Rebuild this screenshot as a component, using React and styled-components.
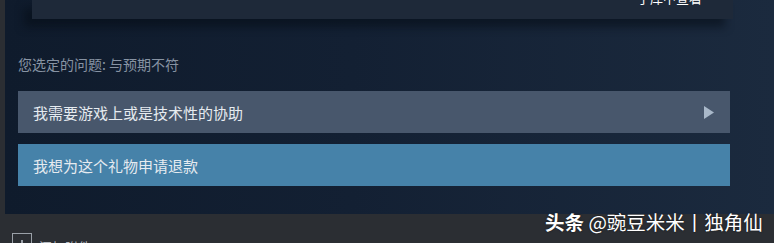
import React from "react";
import styled, { createGlobalStyle } from "styled-components";

const GlobalStyle = createGlobalStyle`
  html, body {
    margin: 0;
    padding: 0;
    background: #2b2e33;
    font-family: "Noto Sans CJK SC", "Noto Sans", sans-serif;
    overflow: hidden;
  }
`;

const Page = styled.div`
  position: relative;
  width: 774px;
  height: 243px;
  overflow: hidden;
  background: #2b2e33;
`;

const Panel = styled.div`
  margin-left: 5px;
  height: 214px;
  background: linear-gradient(90deg, #0f1b2c 0%, #132033 45%, #1b2a3e 100%);
  display: flex;
  flex-direction: column;
  padding-left: 13px;
  box-sizing: border-box;
`;

const TopCard = styled.div`
  margin-left: 14px;
  width: 701px;
  height: 19px;
  background: #1e2939;
  box-shadow: -8px 8px 8px rgba(5, 12, 22, 0.55);
  display: flex;
  justify-content: flex-end;
  align-items: flex-start;
  overflow: hidden;
  padding-right: 31px;
  box-sizing: border-box;
`;

const CardLink = styled.span`
  margin-top: -9px;
  font-size: 13px;
  line-height: 14px;
  color: #ffffff;
`;

const Label = styled.div`
  margin-top: 38px;
  font-size: 14px;
  line-height: 15px;
  color: #8793a3;
`;

const Options = styled.div`
  margin-top: 19px;
  display: flex;
  flex-direction: column;
  gap: 11px;
  width: 712px;
`;

const Option = styled.div`
  height: 42px;
  display: flex;
  align-items: center;
  justify-content: space-between;
  padding: 0 16px 0 15px;
  box-sizing: border-box;
  background: ${(p) => (p.$active ? "#4682a9" : "#48576c")};
  color: #e6ebf0;
  font-size: 15px;
`;

const Arrow = styled.svg`
  width: 10px;
  height: 13px;
  fill: #a9b8c9;
`;

const Footer = styled.div`
  display: flex;
  align-items: flex-start;
  gap: 7px;
  padding: 19px 0 0 12px;
`;

const CheckBox = styled.div`
  width: 20px;
  height: 20px;
  border: 1px solid #9aa0a8;
  box-sizing: border-box;
  display: flex;
  justify-content: center;
  padding-top: 6px;
`;

const Tick = styled.div`
  width: 2px;
  height: 10px;
  background: #9aa0a8;
`;

const FooterText = styled.span`
  margin-top: 4px;
  font-size: 13px;
  color: #b8bcc2;
`;

const Watermark = styled.div`
  position: absolute;
  left: 545px;
  top: 209px;
  font-size: 19.5px;
  line-height: 25px;
  color: #ffffff;
  white-space: nowrap;
  text-shadow: 0 0 2px rgba(0, 0, 0, 0.6);
`;

const Brand = styled.b`
  font-weight: 700;
`;

export default function App() {
  return (
    <Page>
      <GlobalStyle />
      <Panel>
        <TopCard>
          <CardLink>于库中查看</CardLink>
        </TopCard>
        <Label>您选定的问题: 与预期不符</Label>
        <Options>
          <Option>
            我需要游戏上或是技术性的协助
            <Arrow viewBox="0 0 10 13">
              <polygon points="0,0 10,6.5 0,13" />
            </Arrow>
          </Option>
          <Option $active>我想为这个礼物申请退款</Option>
        </Options>
      </Panel>
      <Footer>
        <CheckBox>
          <Tick />
        </CheckBox>
        <FooterText>添加附件</FooterText>
      </Footer>
      <Watermark>
        <Brand>头条</Brand> @豌豆米米丨独角仙
      </Watermark>
    </Page>
  );
}
